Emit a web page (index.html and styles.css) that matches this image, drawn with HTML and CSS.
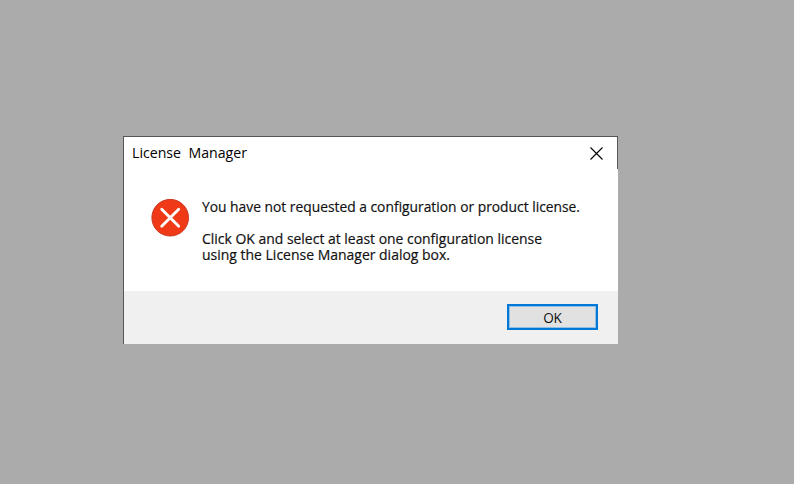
FILE: index.html
```html
<!DOCTYPE html>
<html lang="en">
<head>
<meta charset="utf-8">
<title>License Manager</title>
<link rel="stylesheet" href="styles.css">
</head>
<body>
<main class="dialog" role="alertdialog">
  <header class="titlebar">
    <svg class="title" width="140" height="32"><text x="8" y="21" textLength="115" lengthAdjust="spacingAndGlyphs">License&#160; Manager</text></svg>
    <button class="close" aria-label="Close"><svg width="13" height="13" viewBox="0 0 13 13"><path d="M.5.5 12.5 12.5M12.5.5.5 12.5"/></svg></button>
  </header>
  <section class="content">
    <svg class="error" width="40" height="40" viewBox="0 0 40 40"><circle cx="20.2" cy="20.7" r="18.3"/><path d="M11.7 12.2 28.7 29.2M28.7 12.2 11.7 29.2"/></svg>
    <svg class="message" width="400" height="72">
      <text x="0" y="15" textLength="378" lengthAdjust="spacingAndGlyphs">You have not requested a configuration or product license.</text>
      <text><tspan x="0" y="47" textLength="340" lengthAdjust="spacingAndGlyphs">Click OK and select at least one configuration license</tspan><tspan x="0" y="63" textLength="248" lengthAdjust="spacingAndGlyphs">using the License Manager dialog box.</tspan></text>
    </svg>
  </section>
  <footer class="footer"><button class="ok">OK</button></footer>
</main>
</body>
</html>
```

FILE: styles.css
```css
* { box-sizing: border-box; }
body {
  margin: 0;
  padding: 136px 0 0 123px;
  height: 484px;
  background: #ababab;
  font-family: "Open Sans", "Noto Sans", sans-serif;
  color: #000;
}
.dialog {
  width: 495px;
  height: 208px;
  display: flex;
  flex-direction: column;
  background: #fff;
  border-left: 1px solid #555;
}
.titlebar {
  height: 33px;
  display: flex;
  justify-content: space-between;
  border-top: 1px solid #555;
  border-right: 1px solid #555;
}
.title { font-size: 14.5px; }
.close {
  width: 43px;
  border: 0;
  background: none;
  display: flex;
  align-items: flex-start;
  padding: 10px 0 0 16px;
}
.close svg { display: block; }
.close path { stroke: #000; stroke-width: 1.1; fill: none; }
.content {
  height: 122px;
  display: flex;
  padding: 28px 0 0 26px;
}
.error circle { fill: #f03a17; stroke: #c8341b; stroke-width: 1; }
.error path { stroke: #fff; stroke-width: 2.8; stroke-linecap: round; fill: none; }
.message {
  margin-left: 12px;
  font-size: 13.6px;
  font-weight: 500;
  fill: #111;
  stroke: #111;
  stroke-width: .18px;
}
.footer {
  flex: 1;
  background: #f0f0f0;
  display: flex;
  justify-content: flex-end;
  padding: 13px 20px 0 0;
}
.ok {
  width: 91px;
  height: 26px;
  padding: 1px 0 0;
  border: 2px solid #0078d7;
  box-shadow: inset 0 0 0 1px #8fbfe3;
  background: #e1e1e1;
  font: 500 13.6px "Open Sans", sans-serif;
  letter-spacing: -.3px;
  color: #111;
}
```
